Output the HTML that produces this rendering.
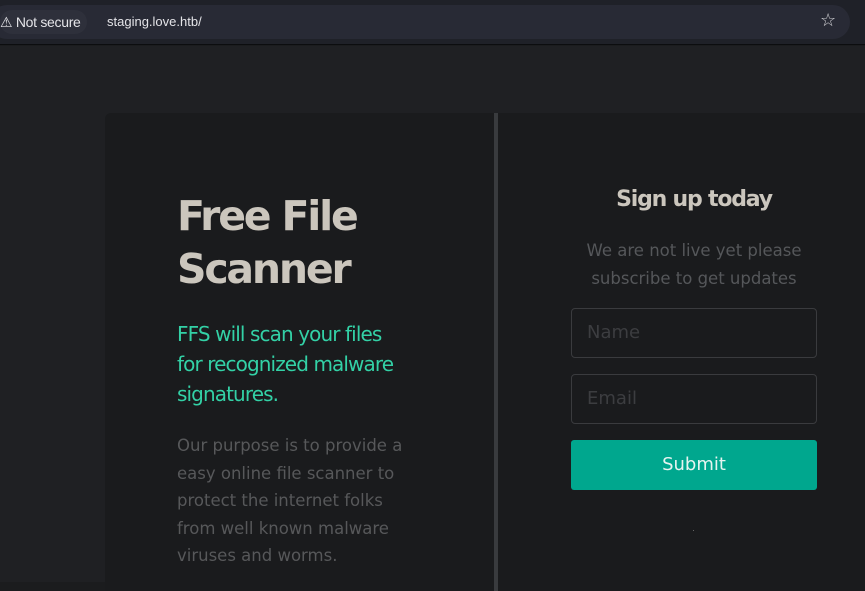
<!DOCTYPE html>
<html><head><style>
*{margin:0;padding:0;box-sizing:border-box}
body{width:865px;height:591px;overflow:hidden;background:#1b1c1e;font-family:"DejaVu Sans","Liberation Sans",sans-serif;position:relative}
.top{position:absolute;left:0;top:0;width:865px;height:45px;background:#1f2128;border-bottom:1px solid #0c0d0f}
.url{position:absolute;left:-10px;top:5px;width:860px;height:34px;border-radius:17px;background:#282a35}
.ns{position:absolute;left:0;top:10px;height:24px;padding:0 6px 0 0;border-radius:12px;background:#2e303b;color:#e4e4e8;font-size:14px;line-height:24px;font-family:"Liberation Sans",sans-serif;letter-spacing:-0.3px}
.host{position:absolute;left:107px;top:14px;color:#e4e4e8;font-size:13px;font-family:"Liberation Sans",sans-serif}
.star{position:absolute;left:820px;top:10px;color:#d0d0d4;font-size:18px}
.page{position:absolute;left:0;top:46px;width:865px;height:536px;background:#1f2023}
.card{position:absolute;left:105px;top:113px;width:760px;height:478px;background:#1a1b1d;border-top-left-radius:6px}
.div{position:absolute;left:494px;top:113px;width:4px;height:478px;background:#393b3e}
h1{position:absolute;left:177px;top:190px;color:#cbc6bd;font-size:41px;line-height:53px;font-weight:bold;letter-spacing:-2.2px}
.sub{position:absolute;left:177px;top:319px;width:240px;color:#33d1a6;font-size:20px;line-height:30px;letter-spacing:-0.9px}
.p{position:absolute;left:177px;top:432px;width:240px;color:#57585a;font-size:16.5px;line-height:27.5px}
h2{position:absolute;left:571px;top:187px;width:246px;text-align:center;color:#cbc6bd;font-size:22px;font-weight:bold;letter-spacing:-1.2px}
.p2{position:absolute;left:571px;top:237px;width:246px;text-align:center;color:#55575a;font-size:16.5px;line-height:28px}
.in{position:absolute;left:571px;width:246px;height:50px;border:1px solid #3a3b3e;border-radius:4px;color:#3c3d40;font-size:18px;line-height:48px;padding-left:15px}
.btn{position:absolute;left:571px;top:440px;width:246px;height:50px;background:#00a78e;border-radius:3px;color:#e6f4f0;font-size:18px;line-height:50px;text-align:center}
</style></head><body>
<div class="top"><div class="url"></div><div class="ns">⚠ Not secure</div><div class="host">staging.love.htb/</div><div class="star">☆</div></div>
<div class="page"></div>
<div class="card"></div>
<div class="div"></div>
<h1>Free File<br>Scanner</h1>
<div class="sub">FFS will scan your files<br>for recognized malware<br>signatures.</div>
<div class="p">Our purpose is to provide a easy online file scanner to protect the internet folks from well known malware viruses and worms.</div>
<h2>Sign up today</h2>
<div class="p2">We are not live yet please subscribe to get updates</div>
<div class="in" style="top:308px">Name</div>
<div class="in" style="top:374px">Email</div>
<div class="btn">Submit</div>
<div style="position:absolute;left:693px;top:530px;width:1px;height:1px;background:#666"></div>
</body></html>
